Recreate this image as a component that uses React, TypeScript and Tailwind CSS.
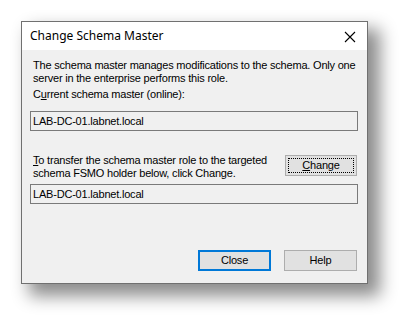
import { ReactElement } from "react";

function TextBox({ value }: { value: string }): ReactElement {
  return (
    <div className="h-[20px] border border-[#7a7a7a] bg-[#f0f0f0] flex items-center pl-[2px] text-[11px] text-black">
      {value}
    </div>
  );
}

export default function App(): ReactElement {
  return (
    <section className="w-[410px] h-[326px] bg-white pt-[21px] pl-[21px] font-['Liberation_Sans',Arial,sans-serif]">
      <div className="w-[347px] h-[263px] border border-[#707070] bg-[#f0f0f0] flex flex-col shadow-[10px_10px_16px_2px_rgba(0,0,0,0.45)]">
        <div className="h-[28px] bg-white flex items-center justify-between pl-[8px] pr-[11px]">
          <span className="text-[12px] text-black font-['Noto_Sans',sans-serif] leading-none">
            Change Schema Master
          </span>
          <svg width="12" height="12" viewBox="0 0 12 12" className="mt-[1px]">
            <path d="M1 1 L11 11 M11 1 L1 11" stroke="#000" strokeWidth="1.1" />
          </svg>
        </div>
        <div className="flex-1 pl-[8px] pr-[9px] pt-[9px] text-[11px] leading-[13px] text-black tracking-[-0.2px] whitespace-nowrap">
          <p className="pl-[3px]">
            The schema master manages modifications to the schema. Only one
            <br />
            server in the enterprise performs this role.
          </p>
          <p className="pl-[3px] mt-[3px]">
            C<span className="underline">u</span>rrent schema master (online):
          </p>
          <div className="mt-[10px]">
            <TextBox value="LAB-DC-01.labnet.local" />
          </div>
          <div className="mt-[23px] flex justify-between items-start">
            <p className="pl-[3px]">
              <span className="underline">T</span>o transfer the schema master role to the targeted
              <br />
              schema FSMO holder below, click Change.
            </p>
            <button className="w-[72px] h-[21px] mt-[1px] mr-[1px] border border-[#adadad] bg-[#e1e1e1] p-[2px]">
              <span className="flex h-full w-full items-center justify-center border border-dotted border-black text-[11px]">
                <span className="underline">C</span>hange
              </span>
            </button>
          </div>
          <div className="mt-[4px]">
            <TextBox value="LAB-DC-01.labnet.local" />
          </div>
          <div className="mt-[46px] flex justify-end gap-[13px] pr-[1px]">
            <button className="w-[73px] h-[21px] border-2 border-[#0078d7] bg-[#e1e1e1] text-[11px]">
              Close
            </button>
            <button className="w-[73px] h-[21px] border border-[#adadad] bg-[#e1e1e1] text-[11px]">
              Help
            </button>
          </div>
        </div>
      </div>
    </section>
  );
}
